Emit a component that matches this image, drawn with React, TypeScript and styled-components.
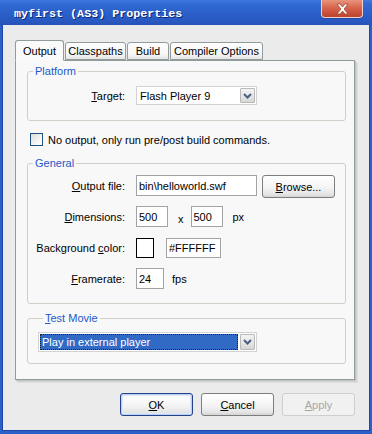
import React from "react";
import styled, { createGlobalStyle, css } from "styled-components";

const GlobalStyle = createGlobalStyle`
  html, body { margin: 0; padding: 0; background: #fff; }
  body { font-family: "Liberation Sans", Arial, sans-serif; font-size: 11px; color: #000; }
  #root { width: 372px; height: 434px; }
`;

const Window = styled.div`
  width: 372px;
  height: 434px;
  box-sizing: border-box;
  display: flex;
  flex-direction: column;
  background: #2b5fc9;
  padding: 0 3px 3px;
  overflow: hidden;
`;

const TitleBar = styled.div`
  height: 25px;
  flex-shrink: 0;
  margin: 0 -3px;
  padding: 0 9px 0 14px;
  display: flex;
  align-items: flex-start;
  justify-content: space-between;
  background: linear-gradient(to bottom, #3f78de 0%, #3169d3 18%, #2b5fc9 50%, #2858c0 85%, #2452b8 100%);
`;

const Title = styled.div`
  font-family: "Liberation Mono", "Courier New", monospace;
  font-weight: bold;
  font-size: 11.7px;
  line-height: 25px;
  padding-top: 2px;
  color: #fff;
  text-shadow: 1px 1px 0 #0c2a7a;
  white-space: pre;
`;

const CloseButton = styled.div`
  width: 42px;
  height: 18px;
  box-sizing: border-box;
  border: 1px solid #f0d0c8;
  border-top: none;
  border-radius: 0 0 4px 4px;
  background: linear-gradient(to bottom, #e9957f 0%, #d96a50 40%, #c9503a 75%, #b9442f 100%);
  display: flex;
  align-items: center;
  justify-content: center;
  box-shadow: 0 1px 0 #1f4aa8;
`;

const Client = styled.div`
  flex: 1;
  display: flex;
  flex-direction: column;
  background: #ebebeb;
  padding: 15px 14px 0 12px;
  border-left: 1px solid #1d47a6;
  border-right: 1px solid #1d47a6;
  border-bottom: 1px solid #1d47a6;
  margin: 0 -1px;
`;

const TabStrip = styled.div`
  display: flex;
  align-items: flex-end;
  height: 21px;
  margin-bottom: -1px;
  position: relative;
  z-index: 1;
`;

const Tab = styled.div<{ $active?: boolean; $w: number }>`
  box-sizing: border-box;
  width: ${(p) => p.$w}px;
  border: 1px solid #919b9c;
  border-radius: 3px 3px 0 0;
  display: flex;
  align-items: center;
  justify-content: center;
  white-space: nowrap;
  ${(p) =>
    p.$active
      ? css`
          height: 21px;
          background: #fafafa;
          border-bottom-color: #fafafa;
        `
      : css`
          height: 18px;
          margin-left: 1px;
          margin-bottom: 1px;
          background: linear-gradient(to bottom, #fefefe 0%, #f6f6f6 70%, #e4e4e4 100%);
        `}
`;

const Panel = styled.div`
  border: 1px solid #919b9c;
  background: #f8f8f8;
  padding: 4px 8px 15px 11px;
  display: flex;
  flex-direction: column;
  box-shadow: 1px 1px 0 #c4c4c4, 2px 2px 0 #d2d2d2, 3px 3px 0 #dfdfdf;
`;

const Group = styled.fieldset<{ $pad: string; $mt?: number }>`
  margin: ${(p) => p.$mt ?? 0}px 0 0;
  min-width: 0;
  border: 1px solid #d0d0c8;
  border-radius: 3px;
  padding: ${(p) => p.$pad};
  display: flex;
  flex-direction: column;
`;

const Legend = styled.legend`
  margin-left: 5px;
  padding: 0 2px;
  line-height: 13px;
  color: #2159c9;
`;

const Rows = styled.div`
  display: flex;
  flex-direction: column;
  gap: 10px;
`;

const Row = styled.div<{ $h?: number }>`
  display: flex;
  align-items: center;
  height: ${(p) => p.$h ?? 21}px;
`;

const Label = styled.span`
  width: 97px;
  flex-shrink: 0;
  text-align: right;
  margin-right: 11px;
`;

const U = styled.span`
  text-decoration: underline;
`;

const TextBox = styled.div<{ $w: number; $h?: number }>`
  box-sizing: border-box;
  width: ${(p) => p.$w}px;
  height: ${(p) => p.$h ?? 21}px;
  border: 1px solid #a3a3a3;
  background: #fff;
  padding-left: 2px;
  display: flex;
  align-items: center;
  white-space: nowrap;
`;

const Swatch = styled.div`
  box-sizing: border-box;
  width: 18px;
  height: 20px;
  border: 1px solid #000;
  background: #fff;
  margin-right: 12px;
`;

const Unit = styled.span<{ $ml: number; $mr?: number; $dy?: number }>`
  margin-left: ${(p) => p.$ml}px;
  margin-right: ${(p) => p.$mr ?? 0}px;
  position: relative;
  top: ${(p) => p.$dy ?? 0}px;
`;

const Combo = styled.div<{ $w: number; $h: number }>`
  box-sizing: border-box;
  width: ${(p) => p.$w}px;
  height: ${(p) => p.$h}px;
  border: 1px solid #d2d2d2;
  background: #fff;
  padding: 1px;
  display: flex;
  align-items: stretch;
`;

const ComboText = styled.div<{ $selected?: boolean }>`
  flex: 1;
  display: flex;
  align-items: center;
  white-space: nowrap;
  margin-right: 2px;
  ${(p) =>
    p.$selected
      ? css`
          background: #316ac5;
          color: #fff;
          border: 1px dotted #e2b53a;
          outline: 1px dotted #222;
          outline-offset: -1px;
          padding-left: 1px;
        `
      : css`
          padding-left: 2px;
        `}
`;

const DropButton = styled.div`
  width: 15px;
  box-sizing: border-box;
  border: 1px solid #b9b9b9;
  border-radius: 1px;
  background: linear-gradient(to bottom, #f3f3f3 0%, #e4e4e4 60%, #d6d6d6 100%);
  display: flex;
  align-items: center;
  justify-content: center;
`;

const CheckRow = styled.div`
  display: flex;
  align-items: center;
  margin: 12px 0 11px 3px;
  height: 13px;
`;

const CheckBox = styled.div`
  width: 13px;
  height: 13px;
  box-sizing: border-box;
  border: 1px solid #1c5180;
  background: linear-gradient(135deg, #dcdcd7 0%, #f4f4f2 60%, #fff 100%);
  margin-right: 5px;
`;

const Button = styled.div<{ $default?: boolean; $disabled?: boolean; $w?: number }>`
  box-sizing: border-box;
  width: ${(p) => p.$w ?? 73}px;
  height: 23px;
  border-radius: 3px;
  border: 1px solid #7d7d7d;
  background: linear-gradient(to bottom, #ffffff 0%, #f4f4f4 55%, #e6e6e6 85%, #d4d4d4 100%);
  display: flex;
  align-items: center;
  justify-content: center;
  ${(p) =>
    p.$default &&
    css`
      border-color: #23428a;
      box-shadow: inset 0 0 0 1px #b8d0f2, inset 0 0 0 2px #dde9f9;
    `}
  ${(p) =>
    p.$disabled &&
    css`
      border-color: #cfcfcf;
      background: #f1f1f1;
      color: #a6a6a6;
    `}
`;

const ButtonBar = styled.div`
  display: flex;
  justify-content: flex-end;
  gap: 8px;
  margin-top: 13px;
`;

const Chevron = () => (
  <svg width="9" height="6" viewBox="0 0 9 6">
    <path d="M1 1 L4.5 4.5 L8 1" fill="none" stroke="#4a5f86" strokeWidth="2" />
  </svg>
);

const CloseX = () => (
  <svg width="13" height="12" viewBox="0 0 13 12">
    <path
      d="M1 1 H4 L6.5 4 L9 1 H12 L8 6 L12 11 H9 L6.5 8 L4 11 H1 L5 6 Z"
      fill="#fff"
      stroke="#9a4a3c"
      strokeWidth="0.8"
    />
  </svg>
);

export default function App() {
  return (
    <>
      <GlobalStyle />
      <Window>
        <TitleBar>
          <Title>myfirst (AS3) Properties</Title>
          <CloseButton>
            <CloseX />
          </CloseButton>
        </TitleBar>
        <Client>
          <TabStrip>
            <Tab $active $w={49}>Output</Tab>
            <Tab $w={61}>Classpaths</Tab>
            <Tab $w={42}>Build</Tab>
            <Tab $w={93}>Compiler Options</Tab>
          </TabStrip>
          <Panel>
            <Group $pad="8px 0 15px">
              <Legend>Platform</Legend>
              <Row $h={19}>
                <Label>
                  <U>T</U>arget:
                </Label>
                <Combo $w={121} $h={19}>
                  <ComboText>Flash Player 9</ComboText>
                  <DropButton>
                    <Chevron />
                  </DropButton>
                </Combo>
              </Row>
            </Group>
            <CheckRow>
              <CheckBox />
              No output, only run pre/post build commands.
            </CheckRow>
            <Group $pad="5px 0 14px">
              <Legend>General</Legend>
              <Rows>
                <Row>
                  <Label>
                    <U>O</U>utput file:
                  </Label>
                  <TextBox $w={121}>bin\helloworld.swf</TextBox>
                  <Unit $ml={5} $dy={1}>
                    <Button>
                      <span>
                        <U>B</U>rowse...
                      </span>
                    </Button>
                  </Unit>
                </Row>
                <Row>
                  <Label>
                    <U>D</U>imensions:
                  </Label>
                  <TextBox $w={32}>500</TextBox>
                  <Unit $ml={10} $mr={7} $dy={2}>
                    x
                  </Unit>
                  <TextBox $w={32}>500</TextBox>
                  <Unit $ml={10}>px</Unit>
                </Row>
                <Row>
                  <Label>
                    Background <U>c</U>olor:
                  </Label>
                  <Swatch />
                  <TextBox $w={55} $h={20}>
                    #FFFFFF
                  </TextBox>
                </Row>
                <Row>
                  <Label>
                    <U>F</U>ramerate:
                  </Label>
                  <TextBox $w={28}>24</TextBox>
                  <Unit $ml={8}>fps</Unit>
                </Row>
              </Rows>
            </Group>
            <Group $pad="7px 0 11px 10px" $mt={8}>
              <Legend>
                <U>T</U>est Movie
              </Legend>
              <Combo $w={219} $h={20}>
                <ComboText $selected>Play in external player</ComboText>
                <DropButton>
                  <Chevron />
                </DropButton>
              </Combo>
            </Group>
          </Panel>
          <ButtonBar>
            <Button $default>
              <span>
                <U>O</U>K
              </span>
            </Button>
            <Button>
              <span>
                <U>C</U>ancel
              </span>
            </Button>
            <Button $disabled>
              <span>
                <U>A</U>pply
              </span>
            </Button>
          </ButtonBar>
        </Client>
      </Window>
    </>
  );
}
